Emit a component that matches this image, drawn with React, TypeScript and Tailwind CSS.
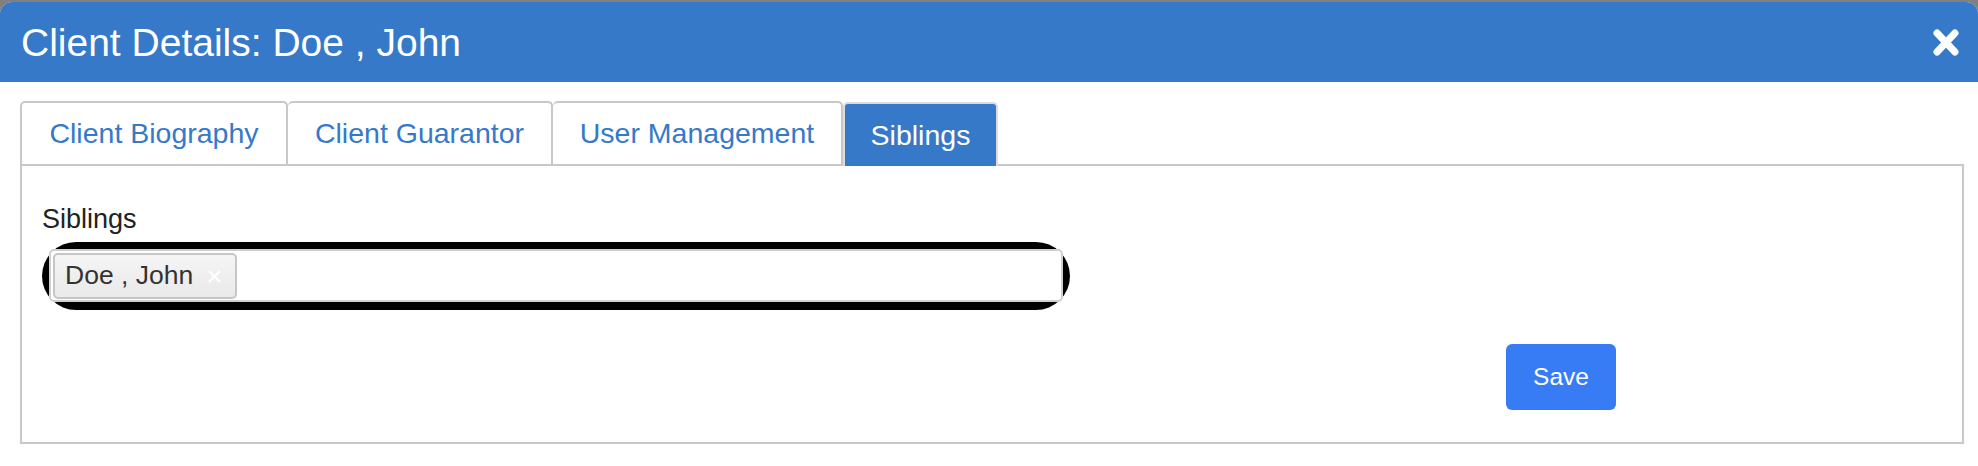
import { useState } from 'react'

const TABS = [
  { id: 'bio', label: 'Client Biography', width: 'w-[268px] border-l-2' },
  { id: 'guarantor', label: 'Client Guarantor', width: 'w-[265px]' },
  { id: 'users', label: 'User Management', width: 'w-[290px]' },
  { id: 'siblings', label: 'Siblings', width: 'w-[155px]' },
] as const

function CloseIcon() {
  return (
    <svg width="26" height="27" viewBox="0 0 26 27" aria-hidden="true">
      <path
        d="M4 4 L22 23 M22 4 L4 23"
        stroke="white"
        strokeWidth="7"
        strokeLinecap="round"
        fill="none"
      />
    </svg>
  )
}

function ChipRemove() {
  return (
    <svg width="15" height="15" viewBox="0 0 15 15" aria-hidden="true">
      <path d="M2 2 L13 13 M13 2 L2 13" stroke="white" strokeWidth="2.4" fill="none" />
    </svg>
  )
}

export default function App() {
  const [active, setActive] = useState<string>('siblings')
  const [siblings, setSiblings] = useState(['Doe , John'])

  return (
    <div className="min-h-[466px] bg-[#808080] pt-[2px] font-['Liberation_Sans',Arial,sans-serif]">
      <div className="min-h-[464px] rounded-t-[12px] bg-white">
        <header className="flex h-[80px] items-center justify-between rounded-t-[12px] bg-[#3679c8] pl-[21px] pr-[19px]">
          <h1 className="text-[39px] leading-none text-white">Client Details: Doe , John</h1>
          <button type="button" className="flex items-center">
            <CloseIcon />
          </button>
        </header>

        <div className="pl-[20px] pr-[14px] pt-[19px]">
          <div className="flex items-end">
            {TABS.map((tab) => {
              const isActive = tab.id === active
              return isActive ? (
                <button
                  key={tab.id}
                  type="button"
                  onClick={() => setActive(tab.id)}
                  className={`relative z-10 -mb-[2px] flex h-[64px] items-center justify-center rounded-t-[5px] border-2 border-b-0 border-[#dcdcdc] bg-[#3679c8] text-[28.5px] text-white ${tab.width}`}
                >
                  {tab.label}
                </button>
              ) : (
                <button
                  key={tab.id}
                  type="button"
                  onClick={() => setActive(tab.id)}
                  className={`flex h-[63px] items-center justify-center rounded-t-[5px] border-t-2 border-r-2 border-[#c8c8c8] bg-white text-[28.5px] text-[#3679c8] ${tab.width}`}
                >
                  {tab.label}
                </button>
              )
            })}
          </div>

          <div className="border-2 border-[#c8c8c8] px-[20px] pt-[38px] pb-[32px]">
            <p className="text-[27px] leading-[31px] text-[#222]">Siblings</p>

            <div className="mt-[7px] w-[1028px] rounded-full bg-black px-[7px] pt-[7px] pb-[8px]">
              <div className="flex h-[53px] items-start gap-2 rounded-[5px] border-2 border-[#cfcfcf] bg-white pt-[2px] pl-[2px]">
                {siblings.map((name) => (
                  <span
                    key={name}
                    className="flex h-[46px] items-center rounded-[5px] border-2 border-[#c6c6c6] bg-gradient-to-b from-[#f5f5f5] to-[#e9e9e9] pl-[10px] pr-[13px] text-[26.5px] text-[#333]"
                  >
                    {name}
                    <button
                      type="button"
                      onClick={() => setSiblings((current) => current.filter((n) => n !== name))}
                      className="ml-[14px] flex items-center"
                    >
                      <ChipRemove />
                    </button>
                  </span>
                ))}
              </div>
            </div>

            <div className="mt-[34px] flex justify-end pr-[326px]">
              <button
                type="button"
                className="h-[66px] w-[110px] rounded-[6px] bg-[#377bf5] text-[24.5px] text-white"
              >
                Save
              </button>
            </div>
          </div>
        </div>
      </div>
    </div>
  )
}
